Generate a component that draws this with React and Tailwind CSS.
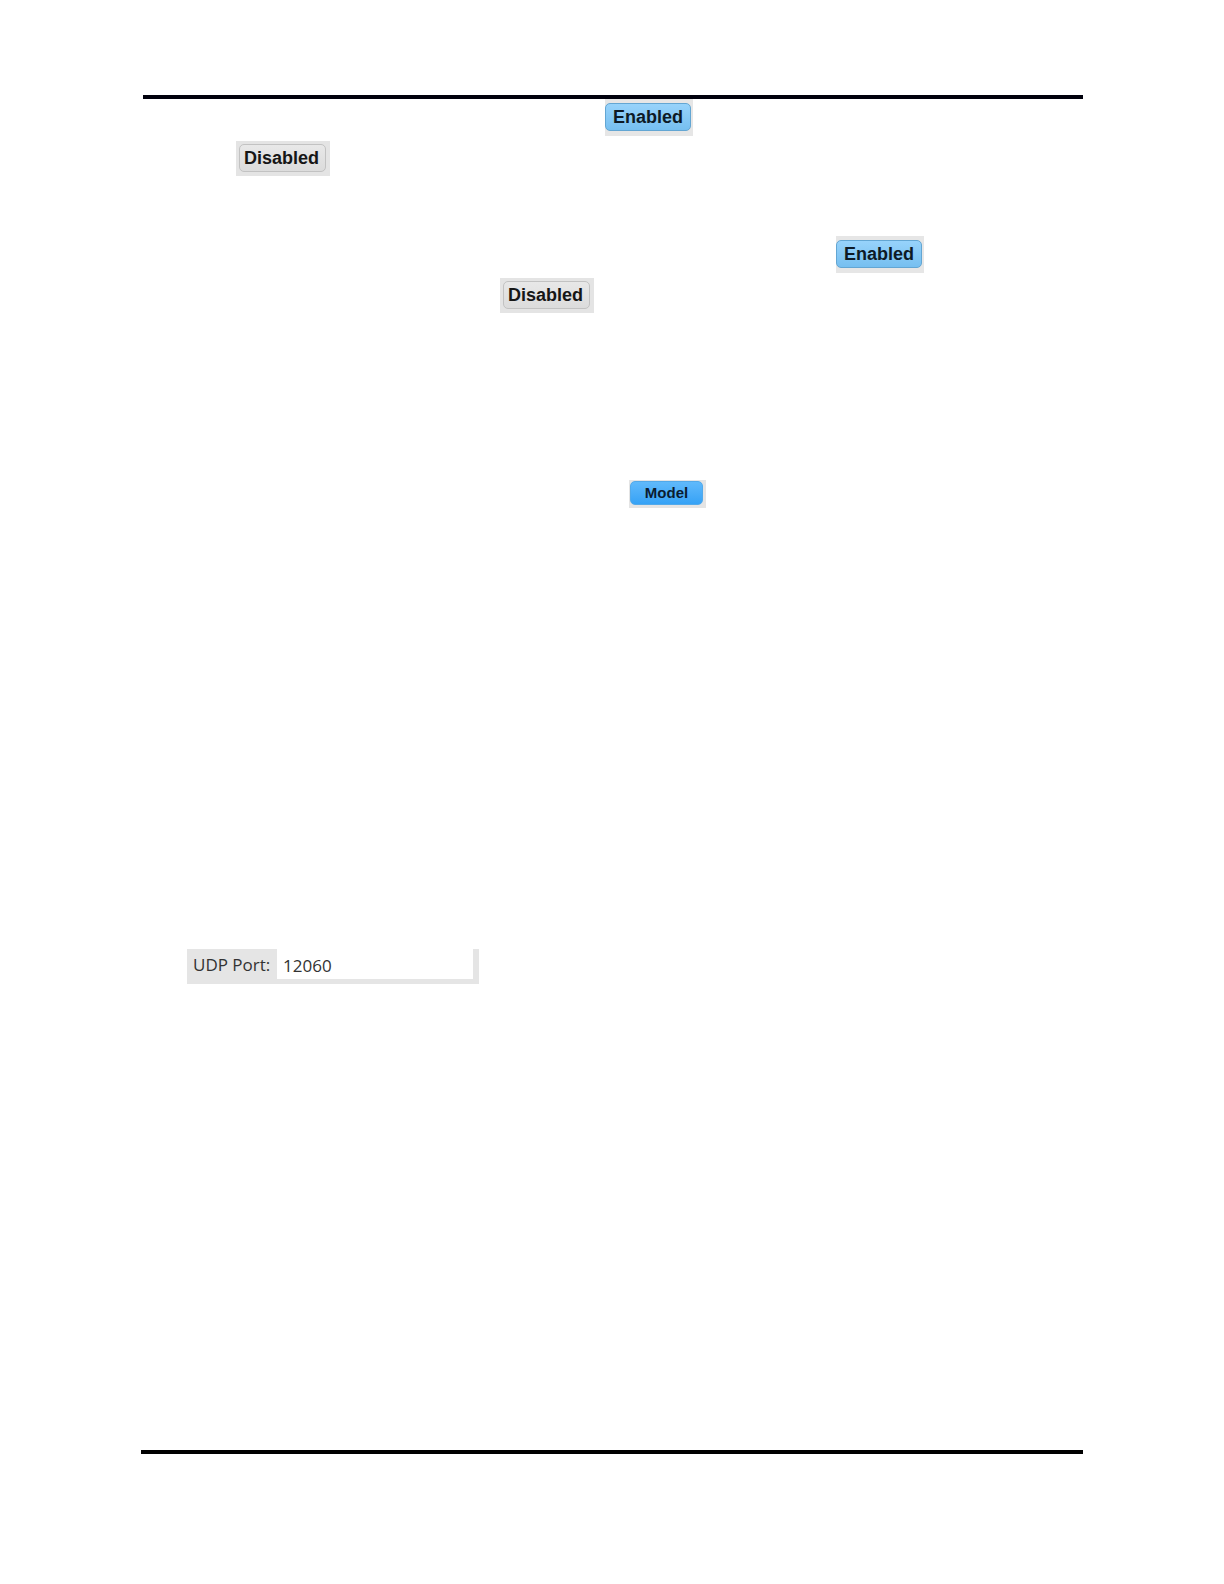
import React from 'react';

const EnabledButton = () => (
  <span className="inline-flex bg-[#e6e6e6] pt-1 pr-0.5 pb-[5px]">
    <button
      type="button"
      className="h-7 w-[86px] rounded-[5px] border border-[#63a6d3] bg-linear-to-b from-[#97d3fb] to-[#76bff0] text-center text-[18px] leading-6 font-bold text-[#0d1a26]"
    >
      Enabled
    </button>
  </span>
);

const DisabledButton = () => (
  <span className="inline-flex bg-[#e4e4e4] pt-[3px] pr-1 pb-1 pl-[3px]">
    <button
      type="button"
      className="h-7 w-[87px] rounded-[5px] border border-[#c2c2c2] bg-linear-to-b from-[#e8e8e8] to-[#dcdcdc] pr-0.5 text-center text-[18px] leading-6 font-bold text-[#161616]"
    >
      Disabled
    </button>
  </span>
);

const App = () => {
  return (
    <div className="flex min-h-screen flex-col bg-white px-[141px] pt-[95px] pb-[130px] font-['Liberation_Sans',Arial,sans-serif]">
      <header className="ml-0.5 h-1 bg-[#00000c]" />

      <main className="flex grow flex-col items-start">
        {/* First pair */}
        <div className="flex pl-[464px]">
          <EnabledButton />
        </div>
        <div className="mt-[5px] flex pl-[95px]">
          <DisabledButton />
        </div>

        {/* Second pair */}
        <div className="mt-[60px] flex pl-[695px]">
          <EnabledButton />
        </div>
        <div className="mt-[5px] flex pl-[359px]">
          <DisabledButton />
        </div>

        {/* Model */}
        <div className="mt-[167px] flex pl-[488px]">
          <span className="inline-flex bg-[#e4e4e4] pt-px pr-[3px] pb-[3px] pl-px">
            <button
              type="button"
              className="h-6 w-[73px] rounded-[5px] border border-[#52a9ea] bg-linear-to-b from-[#5fb9fb] to-[#35a2f6] text-center text-[15px] leading-5 font-bold text-[#0a1c30]"
            >
              Model
            </button>
          </span>
        </div>

        {/* UDP port */}
        <div className="mt-[441px] flex pl-[46px]">
          <div className="flex items-start bg-[#e5e5e5] pr-1.5 pb-[5px] font-['Open_Sans',sans-serif] text-[17px] text-[#333333]">
            <label htmlFor="udp-port" className="h-[30px] w-[90px] pt-0.5 pl-1.5 leading-7 whitespace-nowrap">
              UDP Port:
            </label>
            <input
              id="udp-port"
              type="text"
              defaultValue="12060"
              className="h-[30px] w-[196px] bg-white pt-0.5 pl-1.5 leading-7 outline-none"
            />
          </div>
        </div>
      </main>

      <footer className="h-1 bg-black" />
    </div>
  );
};

export default App;
